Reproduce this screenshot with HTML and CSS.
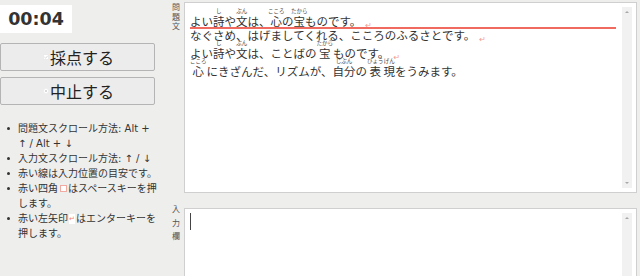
FILE: index.html
```html
<!DOCTYPE html>
<html lang="ja">
<head>
<meta charset="utf-8">
<title>タイピング</title>
<link rel="stylesheet" href="styles.css">
</head>
<body>
<div class="app">
  <aside class="side">
    <div class="timer">00:04</div>
    <button class="btn btn-score" type="button">
      <svg class="btn-icon" viewBox="0 0 6 6" width="6" height="6"><rect x="0.5" y="0.5" width="5" height="5" rx="1" fill="#fff" stroke="#e4e4e4" stroke-width="0.6"/><path d="M1.4 3.1 L2.6 4.2 L4.7 1.8" fill="none" stroke="#cfcfcf" stroke-width="0.8"/></svg>
      <span>採点する</span>
    </button>
    <button class="btn btn-stop" type="button">
      <svg class="btn-icon" viewBox="0 0 6 6" width="6" height="6"><circle cx="3" cy="3" r="2.7" fill="#fff" stroke="#e4e4e4" stroke-width="0.5"/><path d="M1.9 1.9 L4.1 4.1 M4.1 1.9 L1.9 4.1" stroke="#cfcfcf" stroke-width="0.8"/></svg>
      <span>中止する</span>
    </button>
    <ul class="help">
      <li><span>問題文スクロール方法: Alt + ↑ / Alt + ↓</span></li>
      <li><span>入力文スクロール方法: ↑ / ↓</span></li>
      <li><span>赤い線は入力位置の目安です。</span></li>
      <li><span>赤い四角<span class="sq"></span>はスペースキーを押します。</span></li>
      <li><span>赤い左矢印<span class="retbox">↵</span>はエンターキーを押します。</span></li>
    </ul>
  </aside>
  <main class="main">
    <section class="row row-q">
      <div class="label">問<br>題<br>文</div>
      <div class="box box-q">
        <div class="text">
          <div class="line current">よい<span class="rb"><span class="rt">し</span>詩</span>や<span class="rb"><span class="rt">ぶん</span>文</span>は、<span class="rb oh"><span class="rt">こころ</span>心</span>の<span class="rb oh"><span class="rt">たから</span>宝</span>ものです。<span class="ret">↵</span></div>
          <div class="line">なぐさめ、はげましてくれる、こころのふるさとです。<span class="ret">↵</span></div>
          <div class="line">よい<span class="rb"><span class="rt">し</span>詩</span>や<span class="rb"><span class="rt">ぶん</span>文</span>は、ことばの<span class="rb"><span class="rt">たから</span>宝</span>ものです。<span class="ret">↵</span></div>
          <div class="line"><span class="rb"><span class="rt">こころ</span>心</span>にきざんだ、リズムが、<span class="rb"><span class="rt">じぶん</span>自分</span>の<span class="rb"><span class="rt">ひょう</span>表</span><span class="rb"><span class="rt">げん</span>現</span>をうみます。</div>
        </div>
        <div class="scroll"><span class="arr up"></span><span class="arr down"></span></div>
      </div>
    </section>
    <section class="row row-i">
      <div class="label label-i">入<br>力<br>欄</div>
      <div class="box box-i">
        <div class="input"><span class="caret"></span></div>
        <div class="scroll"><span class="arr up"></span></div>
      </div>
    </section>
  </main>
</div>
</body>
</html>
```
FILE: styles.css
```css
html, body {
  margin: 0;
  padding: 0;
}
body {
  width: 640px;
  height: 276px;
  overflow: hidden;
  background: #eeeeec;
  color: #333;
  font-family: "Noto Sans CJK JP", "Noto Sans", sans-serif;
}
.app {
  display: flex;
  height: 276px;
}
.side {
  width: 168px;
  flex-shrink: 0;
  padding-top: 5px;
  box-sizing: border-box;
  display: flex;
  flex-direction: column;
  align-items: flex-start;
}
.timer {
  width: 72px;
  height: 28px;
  background: #fff;
  font-family: "DejaVu Sans", sans-serif;
  font-weight: bold;
  font-size: 17.5px;
  line-height: 28px;
  text-align: center;
  color: #333;
  margin-bottom: 10px;
}
.btn {
  width: 155px;
  height: 28px;
  margin: 0;
  border: 1px solid #b4b4b4;
  border-radius: 2px;
  background: #ececec;
  color: #222;
  font-family: "Noto Sans CJK JP", sans-serif;
  font-size: 16px;
  line-height: 26px;
  display: flex;
  align-items: center;
  justify-content: center;
  gap: 1px;
  padding: 0 0 0 2px;
}
.btn-stop {
  margin-top: 6px;
}
.btn-icon {
  display: block;
}
.help {
  list-style: none;
  margin: 16px 0 0 0;
  padding: 0;
  width: 160px;
  font-family: "DejaVu Sans", "Noto Sans CJK JP", sans-serif;
  font-size: 10px;
  line-height: 15px;
  color: #333;
}
.help li {
  display: flex;
  align-items: flex-start;
}
.help li::before {
  content: "";
  flex-shrink: 0;
  width: 3px;
  height: 3px;
  border-radius: 50%;
  background: #333;
  margin: 6px 8px 0 7px;
}
.help li > span {
  width: 141px;
}
.sq {
  display: inline-block;
  width: 5px;
  height: 5px;
  border: 1px solid #f1aaa2;
  background: #fff;
  margin: 0 1px 0 2px;
}
.retbox {
  display: inline-block;
  background: #fff;
  color: #f08070;
  font-family: "DejaVu Sans", sans-serif;
  font-size: 7px;
  line-height: 10px;
  height: 10px;
  width: 6px;
  margin: 0 1px;
  vertical-align: -2px;
  text-align: center;
  overflow: hidden;
}
.main {
  flex: 1;
  padding: 2px 3px 0 0;
  display: flex;
  flex-direction: column;
  gap: 15px;
}
.row {
  display: flex;
  align-items: flex-start;
}
.label {
  width: 16px;
  flex-shrink: 0;
  text-align: center;
  font-size: 8px;
  line-height: 9.5px;
  color: #555;
}
.label-i {
  line-height: 13.5px;
  margin-top: -6px;
}
.box {
  flex: 1;
  background: #fff;
  border: 1px solid #cfcfcf;
  display: flex;
  box-sizing: border-box;
}
.box-q {
  height: 191px;
}
.box-i {
  height: 68px;
  border-bottom: none;
}
.text {
  flex: 1;
  padding: 7px 0 0 5px;
  font-size: 11.5px;
  line-height: 14px;
  color: #333;
}
.line {
  white-space: nowrap;
}
.line.current::after {
  content: "";
  display: block;
  height: 2px;
  margin: -1px 0;
  background: #f06a5f;
}
.rb {
  display: inline-block;
  text-align: center;
}
.rt {
  display: block;
  font-size: 5.5px;
  line-height: 2px;
  margin-bottom: 2px;
  color: #444;
  white-space: nowrap;
}
.rb.oh .rt {
  margin-left: -3px;
  margin-right: -3px;
}
.ret {
  font-family: "DejaVu Sans", sans-serif;
  font-size: 8px;
  line-height: 0;
  color: #f2a08c;
  margin-left: 4px;
  vertical-align: -2px;
}
.scroll {
  width: 10px;
  flex-shrink: 0;
  margin: 4px 4px 4px 6px;
  background: #f1f1f1;
  display: flex;
  flex-direction: column;
  justify-content: space-between;
  align-items: center;
  padding: 4px 0;
  box-sizing: border-box;
}
.box-i .scroll {
  margin-bottom: 0;
}
.arr {
  width: 0;
  height: 0;
  border-left: 2px solid transparent;
  border-right: 2px solid transparent;
}
.arr.up {
  border-bottom: 2px solid #a8a8a8;
}
.arr.down {
  border-top: 2px solid #a8a8a8;
}
.input {
  flex: 1;
  padding: 4px 0 0 5px;
}
.caret {
  display: block;
  width: 1px;
  height: 17px;
  background: #444;
}
```
